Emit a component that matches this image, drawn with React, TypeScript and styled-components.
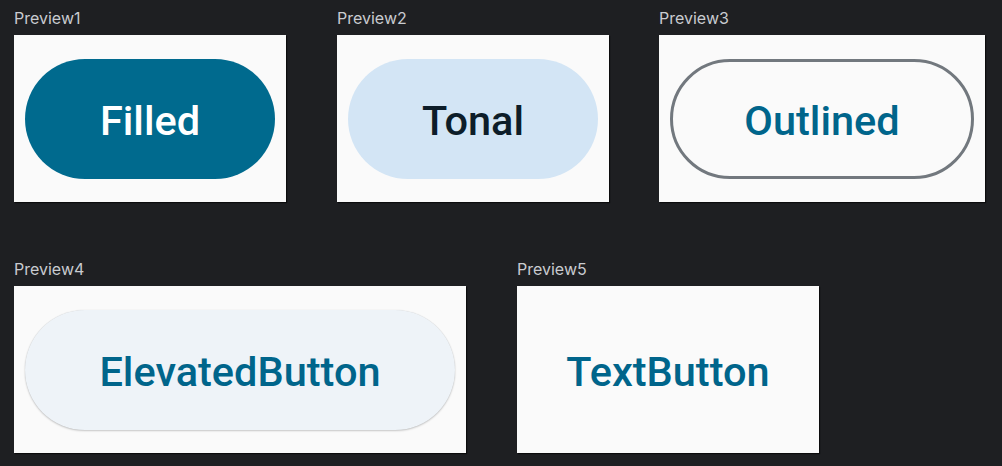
import React from "react";
import styled, { createGlobalStyle, css } from "styled-components";

const Global = createGlobalStyle`
  html, body { margin: 0; padding: 0; background: #1e1f22; }
  body { font-family: Inter, "Noto Sans", sans-serif; }
`;

const Page = styled.div`
  display: flex;
  flex-direction: column;
  gap: 49px;
  padding: 0 0 0 14px;
  width: 1002px;
  height: 466px;
  box-sizing: border-box;
  overflow: hidden;
`;

const Row = styled.div`
  display: flex;
  gap: 51px;
`;

const Preview = styled.div<{ $shift?: number }>`
  display: flex;
  flex-direction: column;
  margin-left: ${(p) => p.$shift ?? 0}px;
`;

const Label = styled.div`
  font-family: Inter, "Noto Sans", sans-serif;
  font-size: 16px;
  line-height: 20px;
  height: 20px;
  padding-top: 8px;
  margin-bottom: 7px;
  color: #c9cbd0;
`;

const Card = styled.div<{ $w: number }>`
  width: ${(p) => p.$w}px;
  height: 167px;
  background: #fafafa;
  box-shadow: 1px 1px 1px rgba(0, 0, 0, 0.6);
  display: flex;
  align-items: center;
  justify-content: center;
  box-sizing: border-box;
  padding: 0 11px;
`;

type Variant = "filled" | "tonal" | "outlined" | "elevated" | "text";

const variants: Record<Variant, ReturnType<typeof css>> = {
  filled: css`
    background: #006a8e;
    color: #ffffff;
  `,
  tonal: css`
    background: #d3e5f5;
    color: #0d1d29;
  `,
  outlined: css`
    background: transparent;
    color: #00658b;
    border: 3px solid #72787e;
  `,
  elevated: css`
    background: #eef3f8;
    color: #00658b;
    box-shadow: 0 1px 2px rgba(0, 0, 0, 0.2), 0 0 1px rgba(0, 0, 0, 0.15);
  `,
  text: css`
    background: transparent;
    color: #00658b;
  `,
};

const Button = styled.button<{ $variant: Variant }>`
  flex: 1;
  height: 120px;
  border: none;
  border-radius: 60px;
  font-family: Roboto, "Noto Sans", sans-serif;
  font-weight: 500;
  font-size: 41.5px;
  letter-spacing: 0;
  display: flex;
  align-items: center;
  justify-content: center;
  box-sizing: border-box;
  padding: 4px 0 0;
  ${(p) => variants[p.$variant]}
`;

export default function App() {
  return (
    <>
      <Global />
      <Page>
        <Row>
          <Preview>
            <Label>Preview1</Label>
            <Card $w={272}>
              <Button $variant="filled">Filled</Button>
            </Card>
          </Preview>
          <Preview>
            <Label>Preview2</Label>
            <Card $w={272}>
              <Button $variant="tonal">Tonal</Button>
            </Card>
          </Preview>
          <Preview $shift={-1}>
            <Label>Preview3</Label>
            <Card $w={326}>
              <Button $variant="outlined">Outlined</Button>
            </Card>
          </Preview>
        </Row>
        <Row>
          <Preview>
            <Label>Preview4</Label>
            <Card $w={452}>
              <Button $variant="elevated">ElevatedButton</Button>
            </Card>
          </Preview>
          <Preview>
            <Label>Preview5</Label>
            <Card $w={302}>
              <Button $variant="text">TextButton</Button>
            </Card>
          </Preview>
        </Row>
      </Page>
    </>
  );
}
